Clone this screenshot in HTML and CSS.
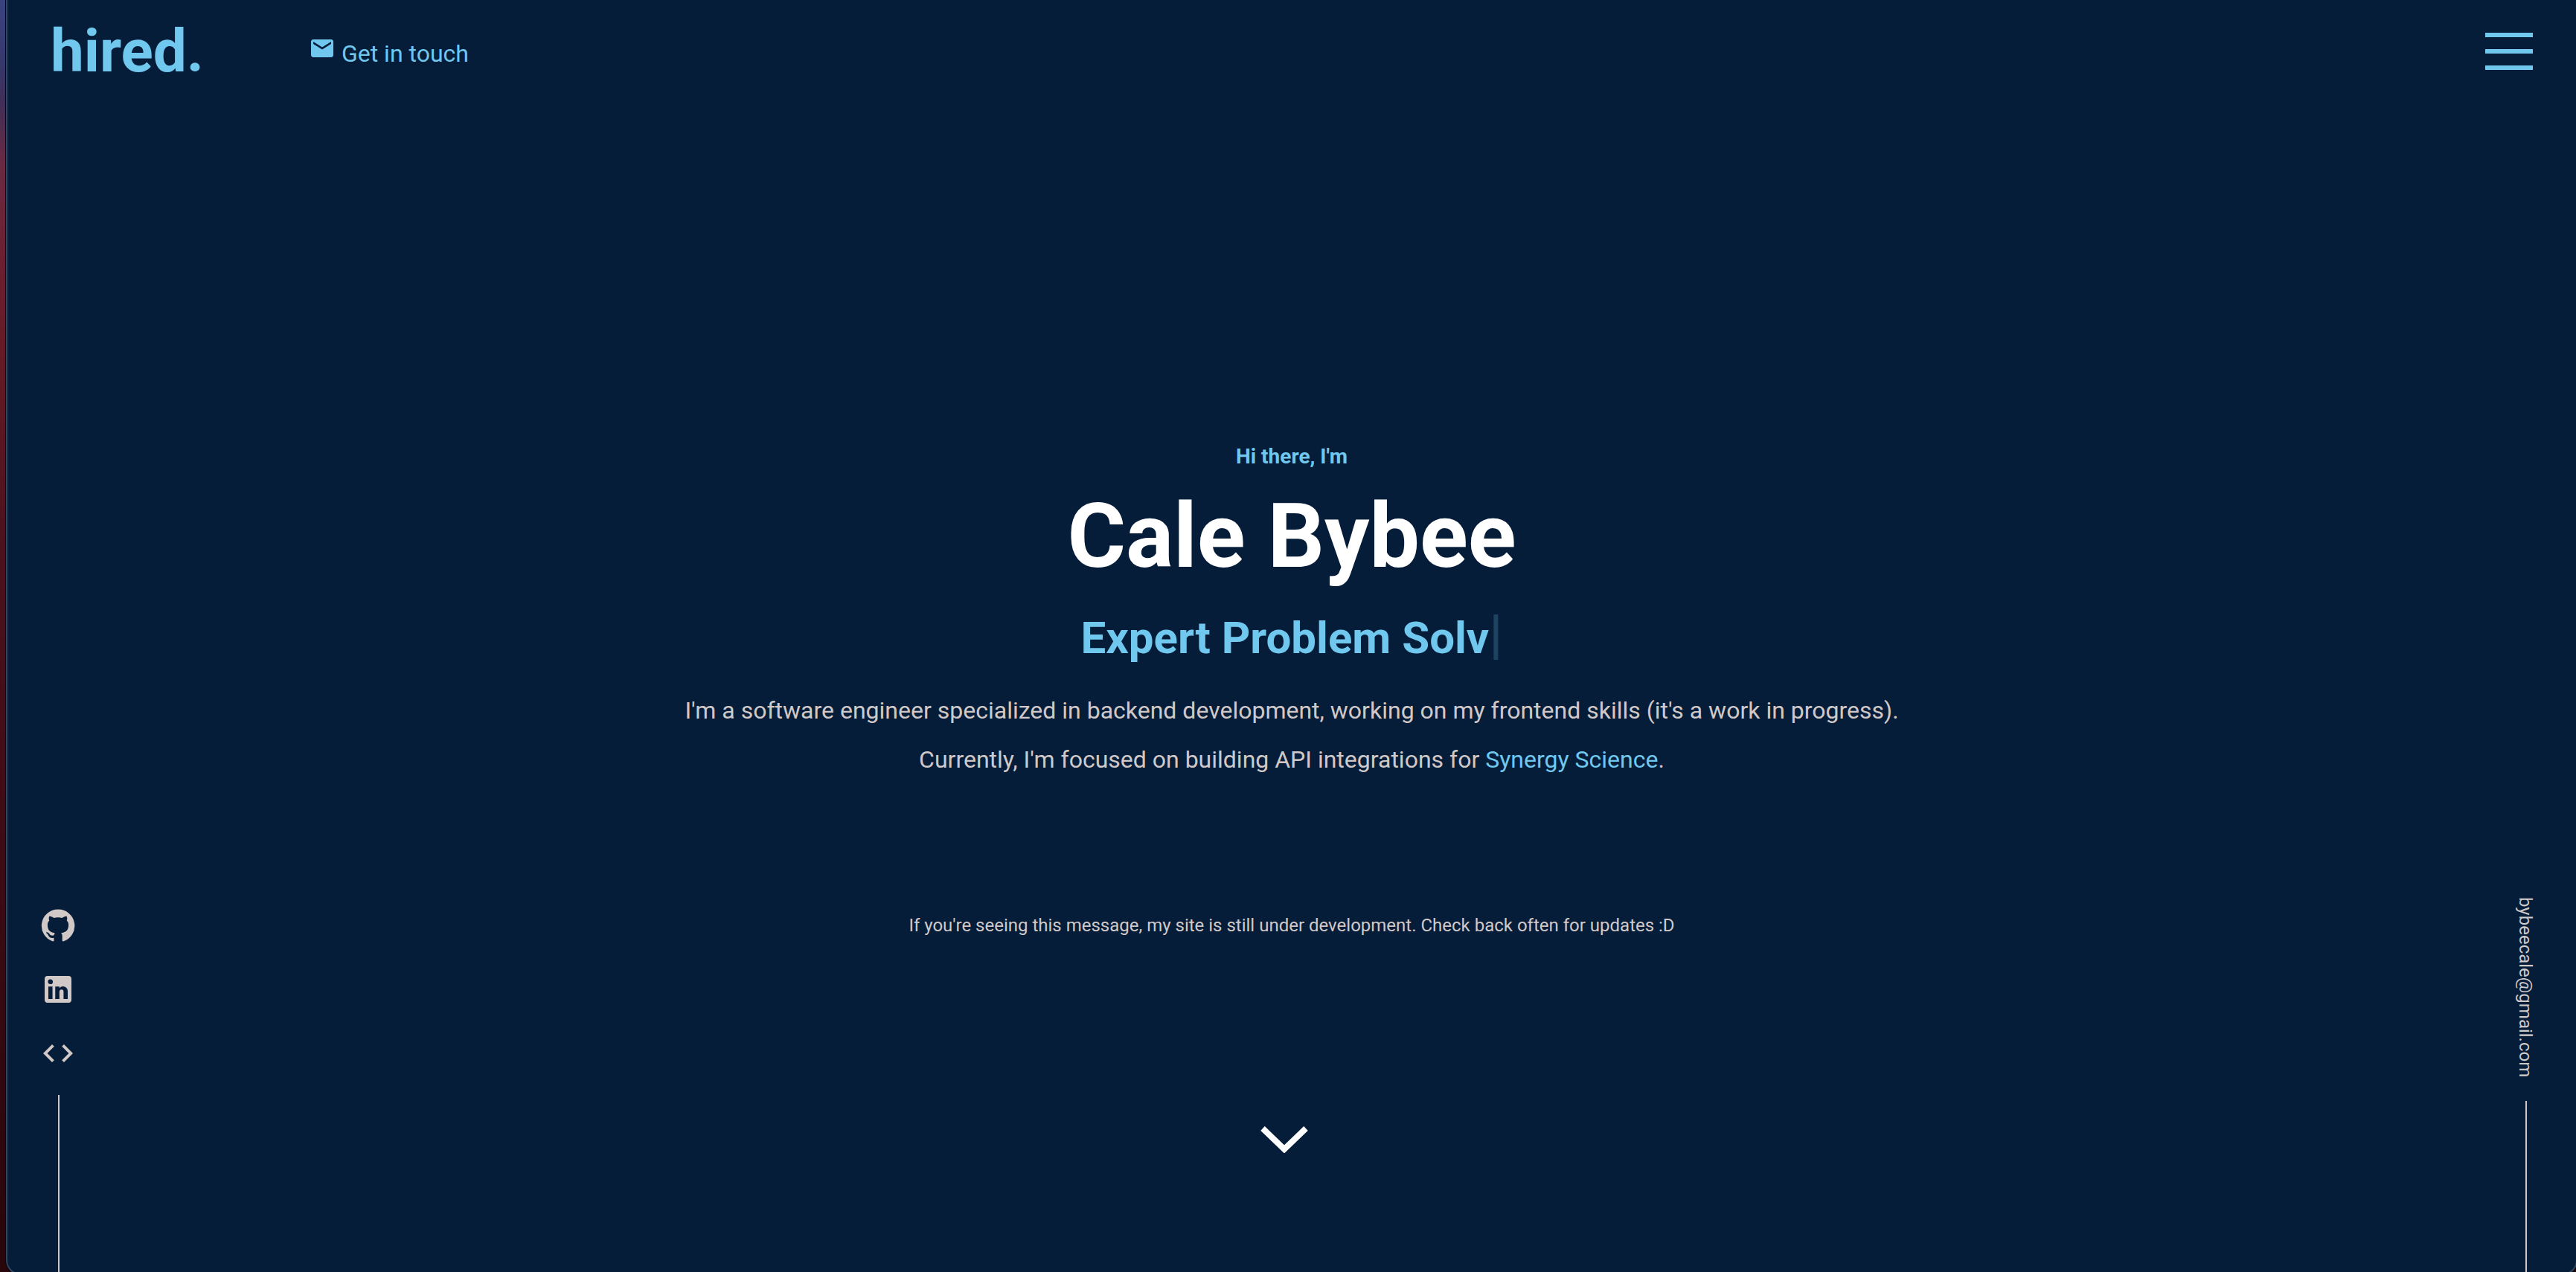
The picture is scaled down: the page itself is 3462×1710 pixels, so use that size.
FILE: index.html
```html
<!DOCTYPE html>
<html lang="en">
<head>
  <meta charset="utf-8">
  <meta name="viewport" content="width=device-width, initial-scale=1">
  <title>Cale Bybee</title>
  <link rel="stylesheet" href="styles.css">
</head>
<body>
  <div class="window">
    <header class="header">
      <a class="logo" href="#">hired.</a>
      <a class="contact" href="mailto:bybeecale@gmail.com"><svg class="contact-icon" viewBox="0 0 24 24" aria-hidden="true"><path d="M20 4H4c-1.100 0-1.990.900-1.990 2L2 18c0 1.100.900 2 2 2h16c1.100 0 2-.900 2-2V6c0-1.100-.900-2-2-2zm0 4l-8 5-8-5V6l8 5 8-5v2z"/></svg> Get in touch</a>
      <button class="menu" type="button" aria-label="Open menu">
        <span class="menu-bar"></span>
        <span class="menu-bar"></span>
        <span class="menu-bar"></span>
      </button>
    </header>

    <div class="content">
      <nav class="rail" aria-label="Profiles">
        <a class="social" href="#" aria-label="GitHub"><svg viewBox="0 0 24 24" aria-hidden="true"><path d="M12 1.270a11 11 0 00-3.480 21.460c.550.090.730-.280.730-.550v-1.840c-3.030.640-3.670-1.460-3.670-1.460-.550-1.290-1.280-1.650-1.280-1.650-.920-.650.100-.650.100-.650 1.100 0 1.730 1.100 1.730 1.100.920 1.650 2.570 1.200 3.210.920a2 2 0 01.640-1.470c-2.470-.270-5.040-1.190-5.040-5.500 0-1.100.460-2.100 1.200-2.840a3.760 3.760 0 010-2.930s.910-.280 3.110 1.100c1.800-.490 3.700-.490 5.500 0 2.100-1.380 3.020-1.100 3.020-1.100a3.760 3.760 0 01.100 2.930c.730.740 1.190 1.740 1.190 2.840 0 4.320-2.580 5.230-5.040 5.500.450.370.820.920.820 2.020v3.030c0 .270.100.640.730.550A11 11 0 0012 1.270"/></svg></a>
        <a class="social" href="#" aria-label="LinkedIn"><svg viewBox="0 0 24 24" aria-hidden="true"><path d="M19 3a2 2 0 0 1 2 2v14a2 2 0 0 1-2 2H5a2 2 0 0 1-2-2V5a2 2 0 0 1 2-2h14m-.500 15.500v-5.300a3.260 3.260 0 0 0-3.260-3.260c-.850 0-1.840.520-2.320 1.300v-1.110h-2.790v8.370h2.790v-4.930c0-.770.620-1.400 1.390-1.400a1.400 1.400 0 0 1 1.400 1.400v4.930h2.790M6.880 8.560a1.680 1.680 0 0 0 1.680-1.680c0-.930-.750-1.690-1.680-1.690a1.690 1.690 0 0 0-1.690 1.690c0 .930.760 1.680 1.690 1.680m1.390 9.940v-8.370H5.500v8.370h2.770z"/></svg></a>
        <a class="social" href="#" aria-label="Source code"><svg viewBox="0 0 24 24" aria-hidden="true"><path d="M9.400 16.600 4.800 12l4.600-4.600L8 6l-6 6 6 6 1.400-1.400zm5.200 0 4.600-4.600-4.600-4.600L16 6l6 6-6 6-1.400-1.400z"/></svg></a>
        <span class="rail-line rail-line-social"></span>
      </nav>

      <main class="hero">
        <p class="greeting">Hi there, I'm</p>
        <h1 class="name">Cale Bybee</h1>
        <h2 class="role">Expert Problem Solv<span class="cursor">|</span></h2>
        <p class="about">I'm a software engineer specialized in backend development, working on my frontend skills (it's a work in progress).<br>Currently, I'm focused on building API integrations for <a class="employer" href="#">Synergy Science</a>.</p>
        <p class="notice">If you're seeing this message, my site is still under development. Check back often for updates :D</p>
        <a class="scroll" href="#" aria-label="Scroll down"><svg class="scroll-icon" viewBox="0 0 64 36" aria-hidden="true"><path d="M3 3 32 31 61 3"/></svg></a>
      </main>

      <aside class="rail">
        <a class="email" href="mailto:bybeecale@gmail.com">bybeecale@gmail.com</a>
        <span class="rail-line rail-line-email"></span>
      </aside>
    </div>
  </div>
</body>
</html>
```
FILE: styles.css
```css
:root {
  --navy: #061d3a;
  --sky: #70c8ee;
  --sand: #d0c9c8;
  --frame: #34465e;
}

* {
  box-sizing: border-box;
}

body {
  display: flex;
  height: 100vh;
  margin: 0;
  overflow: hidden;
  font-family: Roboto, "Liberation Sans", sans-serif;
  color: var(--sand);
  background: linear-gradient(#3a4380 0%, #36386c 5%, #402e58 8%, #6a2a42 13%, #6b2032 20%, #641b26 28%, #4c121e 42%, #3e0c16 65%, #28060b 100%);
}

a {
  color: inherit;
  text-decoration: none;
}

svg {
  fill: currentColor;
}

/* The browser frame runs just past the right and bottom of the screen. */
.window {
  display: flex;
  flex: 1;
  flex-direction: column;
  margin: 0 -2px -4px 8px;
  border: solid var(--frame);
  border-width: 0 2px 2px;
  border-radius: 0 0 20px 20px;
  box-shadow: 0 0 0 1px #05060c;
  background: var(--navy);
}

.header {
  display: flex;
  align-items: center;
  height: 138px;
  padding: 0 58px;
  color: var(--sky);
}

.logo {
  font-size: 80px;
  font-weight: 700;
  line-height: 96px;
}

.contact {
  margin-left: 141px;
  font-size: 32px;
  line-height: 40px;
}

.contact-icon {
  width: 36px;
  height: 36px;
}

.menu {
  display: flex;
  flex-direction: column;
  gap: 16px;
  width: 64px;
  margin-left: auto;
  padding: 0;
  border: 0;
  background: none;
  cursor: pointer;
}

.menu-bar {
  height: 6px;
  background: var(--sky);
}

.content {
  display: grid;
  flex: 1;
  grid-template-columns: auto 1fr auto;
}

.rail {
  display: flex;
  flex-direction: column;
  align-items: center;
  justify-content: flex-end;
  width: 136px;
}

.social {
  height: 48px;
  margin-bottom: 38px;
}

.social svg {
  display: block;
  width: 48px;
  height: 48px;
}

.rail-line {
  width: 2px;
  margin-left: 2px;
  background: var(--sand);
}

.rail-line-social {
  height: 240px;
  margin-top: -6px;
}

.rail-line-email {
  height: 232px;
}

.email {
  margin-bottom: 32px;
  font-size: 24px;
  line-height: 32px;
  writing-mode: vertical-rl;
}

.hero {
  display: flex;
  flex-direction: column;
  align-items: center;
  padding: 460px 0 162px;
  text-align: center;
}

.greeting {
  margin: 0;
  font-size: 28px;
  font-weight: 700;
  line-height: 32px;
  color: var(--sky);
}

.name {
  margin: 20px 0 24px;
  font-size: 120px;
  font-weight: 700;
  line-height: 142px;
  color: #fff;
}

.role {
  margin: 0 0 22px;
  font-size: 60px;
  font-weight: 700;
  line-height: 84px;
  color: var(--sky);
}

.cursor {
  font-size: 72px;
  line-height: 0;
  color: #1e4362;
}

.about {
  margin: 0;
  font-size: 32px;
  line-height: 66px;
}

.employer {
  color: var(--sky);
}

.notice {
  margin: 174px 0 0;
  font-size: 24px;
  line-height: 32px;
}

.scroll {
  margin: auto 20px 0 0;
  color: #fff;
}

.scroll-icon {
  display: block;
  width: 64px;
  height: 36px;
  fill: none;
  stroke: currentColor;
  stroke-width: 8px;
}
```
